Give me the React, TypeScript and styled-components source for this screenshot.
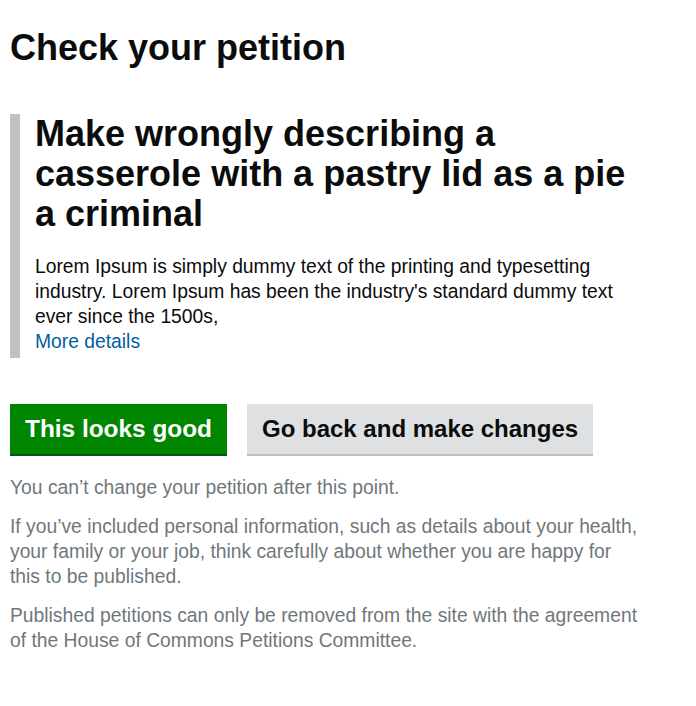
import React from "react";
import styled, { createGlobalStyle } from "styled-components";

const Global = createGlobalStyle`
  html, body { margin: 0; padding: 0; background: #fff; }
  body { font-family: "Liberation Sans", Arial, sans-serif; color: #0b0c0c; }
`;

const Page = styled.main`
  padding: 28px 10px 40px;
  max-width: 635px;
`;

const Title = styled.h1`
  font-size: 36px;
  line-height: 40px;
  font-weight: 700;
  margin: 0 0 46px;
`;

const Panel = styled.section`
  border-left: 10px solid #bfc1c3;
  padding: 0 0 4px 15px;
  margin-bottom: 46px;
`;

const PetitionTitle = styled.h2`
  font-size: 36px;
  line-height: 40px;
  font-weight: 700;
  margin: 0 0 20px;
`;

const Body = styled.p`
  font-size: 19.3px;
  line-height: 25px;
  margin: 0;
`;

const Link = styled.a`
  display: block;
  font-size: 19.3px;
  line-height: 25px;
  color: #005ea5;
  text-decoration: none;
`;

const Actions = styled.div`
  display: flex;
  gap: 20px;
  margin-bottom: 21px;
`;

const Button = styled.button<{ $variant: "primary" | "secondary" }>`
  font-family: inherit;
  font-size: ${(p) => (p.$variant === "primary" ? "24.4px" : "24px")};
  font-weight: 700;
  line-height: 1;
  border: 0;
  border-radius: 0;
  padding: 0 15px;
  height: 50px;
  cursor: pointer;
  color: ${(p) => (p.$variant === "primary" ? "#fff" : "#0b0c0c")};
  background: ${(p) => (p.$variant === "primary" ? "#008500" : "#dee0e2")};
  box-shadow: 0 2px 0 ${(p) => (p.$variant === "primary" ? "#00561f" : "#bfc1c3")};
`;

const Note = styled.p`
  font-size: 19.3px;
  line-height: 25px;
  color: #6f777b;
  margin: 0 0 14px;
`;

export default function App() {
  return (
    <>
      <Global />
      <Page>
        <Title>Check your petition</Title>
        <Panel>
          <PetitionTitle>
            Make wrongly describing a casserole with a pastry lid as a pie a criminal
          </PetitionTitle>
          <Body>
            Lorem Ipsum is simply dummy text of the printing and typesetting industry. Lorem Ipsum
            has been the industry's standard dummy text ever since the 1500s,
          </Body>
          <Link href="#">More details</Link>
        </Panel>
        <Actions>
          <Button $variant="primary">This looks good</Button>
          <Button $variant="secondary">Go back and make changes</Button>
        </Actions>
        <Note>You can’t change your petition after this point.</Note>
        <Note>
          If you’ve included personal information, such as details about your health, your family or
          your job, think carefully about whether you are happy for this to be published.
        </Note>
        <Note>
          Published petitions can only be removed from the site with the agreement of the House of
          Commons Petitions Committee.
        </Note>
      </Page>
    </>
  );
}
